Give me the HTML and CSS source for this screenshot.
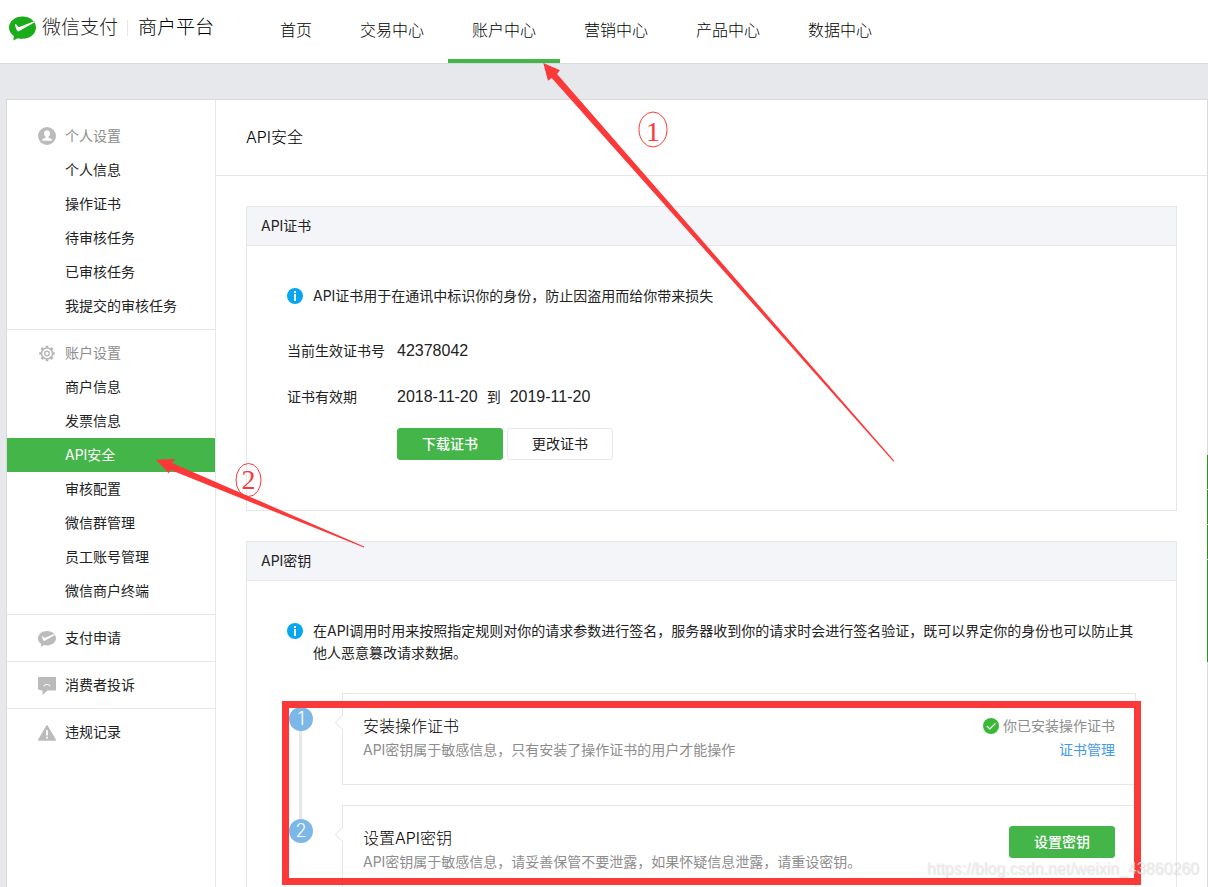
FILE: index.html
```html
<!DOCTYPE html>
<html lang="zh-CN">
<head>
<meta charset="utf-8">
<title>API安全 - 微信支付商户平台</title>
<link rel="stylesheet" href="styles.css">
</head>
<body>
<div class="page">
  <header class="topbar">
    <a class="brand" href="#">
      <svg class="brand-mark" viewBox="0 0 27 25" aria-hidden="true"><path fill="#1aad19" d="M13.500 0.500C6.200 0.500 0 5.300 0 11.500c0 3.600 1.900 6.400 4.900 8.500L4.300 24.600l4.600-2.400c1.500.4 3 .6 4.600.6 7.400 0 13.500-4.800 13.500-11.300C27 5.300 20.900.5 13.500.5z"/><path fill="#fff" d="M6.200 8.200c-.5 1 1.200 5.300 2.100 6.600.5.700 1.200.7 2 .3L25.300 6.600l-.8-1.200-14.200 5.500c-.5.200-.8.100-1.200-.2L6.900 8.100z"/></svg>
      <span>微信支付</span>
      <span class="brand-divider"></span>
      <span class="brand-sub">商户平台</span>
    </a>
    <nav class="topnav">
      <a href="#">首页</a>
      <a href="#">交易中心</a>
      <a class="active" href="#">账户中心</a>
      <a href="#">营销中心</a>
      <a href="#">产品中心</a>
      <a href="#">数据中心</a>
    </nav>
  </header>

  <div class="frame">
    <nav class="sidebar">
      <section class="group">
        <h2 class="row muted">
          <svg class="icon" viewBox="0 0 18 18" aria-hidden="true"><circle cx="9" cy="9" r="9" fill="#bbb"/><path fill="#fff" d="M9 3.200c-1.900 0-3 1.400-3 3.200 0 1.300.6 2.500 1.500 3.200v1.200L4.300 12v1.800h9.400V12l-3.200-1.200V9.600c.9-.7 1.500-1.900 1.500-3.200 0-1.800-1.100-3.200-3-3.200z"/></svg>
          <span>个人设置</span>
        </h2>
        <a class="row item" href="#">个人信息</a>
        <a class="row item" href="#">操作证书</a>
        <a class="row item" href="#">待审核任务</a>
        <a class="row item" href="#">已审核任务</a>
        <a class="row item" href="#">我提交的审核任务</a>
      </section>
      <section class="group">
        <h2 class="row muted">
          <svg class="icon" viewBox="0 0 18 18" aria-hidden="true"><g fill="none" stroke="#b5b5b5"><circle cx="9" cy="9.500" r="5.500" stroke-width="1.500"/><circle cx="9" cy="9.500" r="2.300" stroke-width="1.300"/><path stroke-width="2.600" d="M9 1.700v2M9 15.300v2M1.200 9.500h2M14.800 9.500h2M3.500 4l1.400 1.400M13.100 13.600l1.400 1.400M14.500 4l-1.400 1.400M4.900 13.600l-1.400 1.400"/></g></svg>
          <span>账户设置</span>
        </h2>
        <a class="row item" href="#">商户信息</a>
        <a class="row item" href="#">发票信息</a>
        <a class="row item current" href="#">API安全</a>
        <a class="row item" href="#">审核配置</a>
        <a class="row item" href="#">微信群管理</a>
        <a class="row item" href="#">员工账号管理</a>
        <a class="row item" href="#">微信商户终端</a>
      </section>
      <section class="group">
        <a class="row" href="#">
          <svg class="icon" viewBox="0 0 18 18" aria-hidden="true"><path fill="#bbb" d="M9 2C4 2 0 5.100 0 9.300c0 2.300 1.200 4.200 3.100 5.500l.2 3 3-1.700c.9.200 1.800.3 2.700.3 5 0 9-3 9-7.100S14 2 9 2z"/><path fill="#fff" d="M4.100 7.300c-.3.700.8 3.500 1.400 4.300.3.500.8.500 1.300.2L16.900 6l-.8-1-9.100 3.800c-.4.100-.6.100-.9-.1L4.600 7.200z"/></svg>
          <span>支付申请</span>
        </a>
      </section>
      <section class="group">
        <a class="row" href="#">
          <svg class="icon" viewBox="0 0 18 18" aria-hidden="true"><path fill="#bbb" d="M0 1h18v13.500h-8.500L4.500 19v-4.500L0 13.500z"/><path fill="none" stroke="#fff" stroke-width="1.100" d="M5.800 10.200c1.500-2.200 4.900-2.200 6.400 0"/></svg>
          <span>消费者投诉</span>
        </a>
      </section>
      <section class="group">
        <a class="row" href="#">
          <svg class="icon" viewBox="0 0 18 18" aria-hidden="true"><path fill="#bbb" stroke="#bbb" stroke-width="1.500" stroke-linejoin="round" d="M9 2.800L17.200 17H.8z"/><path fill="#fff" d="M8.100 7h1.800v5.500H8.100zM8.100 13.700h1.800v1.700H8.100z"/></svg>
          <span>违规记录</span>
        </a>
      </section>
    </nav>

    <main class="content">
      <h1 class="title">API安全</h1>
      <div class="panels">
        <section class="panel">
          <h2 class="panel-head">API证书</h2>
          <div class="panel-body">
            <div class="notice">
              <svg class="notice-icon" viewBox="0 0 16 16" aria-hidden="true"><circle cx="8" cy="8" r="8" fill="#06a7ee"/><path fill="#fff" d="M7 3h2v2H7zM7 6h2v7H7z"/></svg>
              <p>API证书用于在通讯中标识你的身份，防止因盗用而给你带来损失</p>
            </div>
            <dl class="facts">
              <dt>当前生效证书号</dt>
              <dd>42378042</dd>
              <dt>证书有效期</dt>
              <dd><span>2018-11-20</span><span class="to">到</span><span>2019-11-20</span></dd>
            </dl>
            <div class="actions">
              <button class="btn primary" type="button">下载证书</button>
              <button class="btn" type="button">更改证书</button>
            </div>
          </div>
        </section>

        <section class="panel">
          <h2 class="panel-head">API密钥</h2>
          <div class="panel-body">
            <div class="notice">
              <svg class="notice-icon" viewBox="0 0 16 16" aria-hidden="true"><circle cx="8" cy="8" r="8" fill="#06a7ee"/><path fill="#fff" d="M7 3h2v2H7zM7 6h2v7H7z"/></svg>
              <p>在API调用时用来按照指定规则对你的请求参数进行签名，服务器收到你的请求时会进行签名验证，既可以界定你的身份也可以防止其他人恶意篡改请求数据。</p>
            </div>
            <ol class="steps">
              <li class="step">
                <span class="num">1</span>
                <div class="card">
                  <div>
                    <h3>安装操作证书</h3>
                    <p class="desc">API密钥属于敏感信息，只有安装了操作证书的用户才能操作</p>
                  </div>
                  <div class="side">
                    <span class="status"><svg class="ok" viewBox="0 0 16 16" aria-hidden="true"><circle cx="8" cy="8" r="8" fill="#3cb838"/><path fill="none" stroke="#fff" stroke-width="1.200" d="M3.800 8l3 3 5.700-5.700"/></svg>你已安装操作证书</span>
                    <a class="link" href="#">证书管理</a>
                  </div>
                </div>
              </li>
              <li class="step">
                <span class="num">2</span>
                <div class="card">
                  <div>
                    <h3>设置API密钥</h3>
                    <p class="desc">API密钥属于敏感信息，请妥善保管不要泄露，如果怀疑信息泄露，请重设密钥。</p>
                  </div>
                  <button class="btn primary" type="button">设置密钥</button>
                </div>
              </li>
            </ol>
          </div>
        </section>
      </div>
    </main>
  </div>

  <div class="edge-tab"><i></i><i></i><i></i><i class="long"></i></div>

  <svg class="marks" width="1208" height="887" viewBox="0 0 1208 887" aria-hidden="true">
    <rect x="285.500" y="704.500" width="852" height="177" fill="none" stroke="#fd3838" stroke-width="7"/>
    <path fill="#fd3838" d="M543.300 63L560 70.300 557 74 894.300 460.700 893.300 461.500 551.700 78 548 80.700z"/>
    <path fill="#fd3838" d="M156 459.700L175 459 172 463 364.200 546.500 363.800 547.500 170.700 470 168.700 473.300z"/>
    <g fill="none" stroke="#fd3838"><ellipse cx="653" cy="129.500" rx="14" ry="17.500"/><ellipse cx="248.500" cy="480" rx="12.500" ry="16.500"/></g>
    <g class="mark-num" fill="#fd3838"><text x="653" y="141">1</text><text x="248.500" y="489">2</text></g>
  </svg>
  <div class="watermark">https://blog.csdn.net/weixin_43860260</div>
</div>
</body>
</html>
```
FILE: styles.css
```css
* { box-sizing: border-box; }

body, h1, h2, h3, p, dl, dd, ol { margin: 0; padding: 0; }

body {
  background: #e7e8eb;
  color: #222;
  font: 14px/22px Inter, "Noto Sans CJK SC", sans-serif;
}

h1, h2, h3 { font-size: 14px; font-weight: inherit; }

a { color: inherit; text-decoration: none; }

.page {
  position: relative;
  display: flex;
  flex-direction: column;
  height: 100vh;
  overflow: hidden;
}

/* Top bar */
.topbar {
  display: flex;
  flex: none;
  background: #fff;
  border-bottom: 1px solid #d9dadc;
}

.brand {
  display: flex;
  align-items: center;
  width: 256px;
  height: 56px;
  padding-left: 9px;
  font-size: 19px;
  font-weight: 300;
  color: #222;
}

.brand-mark { width: 27px; height: 25px; margin-right: 6px; }

.brand-divider {
  width: 1px;
  height: 16px;
  margin: 0 10px 0 9px;
  background: #e7e7e7;
}

.brand-sub { color: #000; }

.topnav {
  display: flex;
  color: #000;
  font-size: 16px;
  font-weight: 300;
}

.topnav a {
  height: 63px;
  padding: 0 24px;
  line-height: 60px;
  border-bottom: 4px solid transparent;
}

.topnav .active { border-color: #44b549; }

/* Main frame */
.frame {
  display: flex;
  flex: none;
  margin: 35px 0 0 6px;
  background: #fff;
  border: 1px solid #d9dadc;
}

.sidebar {
  flex: none;
  width: 209px;
  padding-top: 13px;
  border-right: 1px solid #e7e7eb;
}

.group { padding: 6px 0; }

.group + .group { border-top: 1px solid #e7e7eb; }

.row {
  display: flex;
  align-items: center;
  gap: 9px;
  height: 34px;
  padding-left: 31px;
}

.item { padding-left: 58px; }

.muted { color: #8d8d8d; }

.current { background: #44b549; color: #fff; }

.icon { width: 18px; height: 18px; overflow: visible; }

.content { flex: 1; min-width: 0; }

.title {
  padding: 0 30px;
  border-bottom: 1px solid #e7e7eb;
  color: #000;
  font-size: 16px;
  font-weight: 300;
  line-height: 75px;
}

.panels {
  display: flex;
  flex-direction: column;
  gap: 30px;
  padding: 30px;
}

.panel { border: 1px solid #e7e7eb; }

.panel-head {
  padding: 0 14px;
  background: #f4f5f9;
  border-bottom: 1px solid #e7e7eb;
  line-height: 38px;
}

.panel-body { padding: 39px 40px 50px; }

.notice { display: flex; gap: 10px; }

.notice-icon { flex: none; width: 16px; height: 16px; margin-top: 3px; }

.facts {
  display: grid;
  grid-template-columns: 110px 1fr;
  row-gap: 24px;
  padding: 33px 0 20px;
}

.facts dd {
  display: flex;
  gap: 9px;
  font-family: "Liberation Sans", "Noto Sans CJK SC", sans-serif;
  font-size: 16px;
}

.facts .to { font-size: 14px; }

.actions { display: flex; gap: 4px; padding-left: 110px; }

.btn {
  width: 106px;
  height: 32px;
  padding: 0;
  background: #fff;
  border: 1px solid #e7e7eb;
  border-radius: 3px;
  color: #222;
  font: inherit;
}

.btn.primary {
  background: #44b549;
  border-color: #44b549;
  color: #fff;
  font-weight: 500;
}

/* Steps */
.steps {
  display: flex;
  flex-direction: column;
  gap: 20px;
  padding: 29px 0 0 2px;
  list-style: none;
}

.step {
  position: relative;
  display: grid;
  grid-template-columns: 24px 1fr;
  column-gap: 29px;
}

.step:not(:last-child)::before {
  content: "";
  position: absolute;
  left: 10px;
  top: 26px;
  bottom: -34px;
  width: 3px;
  background: #e7e7eb;
}

.num {
  position: relative;
  height: 24px;
  margin-top: 14px;
  border-radius: 50%;
  background: #7bb8e8;
  color: #fff;
  font-size: 18px;
  font-weight: 300;
  line-height: 24px;
  text-align: center;
}

.card {
  position: relative;
  display: flex;
  justify-content: space-between;
  align-items: flex-start;
  min-height: 92px;
  padding: 20px;
  border: 1px solid #e7e7eb;
}

.card::before {
  content: "";
  position: absolute;
  left: -6px;
  top: 23px;
  width: 10px;
  height: 10px;
  background: #fff;
  border: 1px solid #e7e7eb;
  border-width: 0 0 1px 1px;
  transform: rotate(45deg);
}

.card h3 {
  color: #000;
  font-size: 16px;
  font-weight: 300;
  line-height: 24px;
}

.desc, .side { color: #8d8d8d; line-height: 24px; }

.side { display: flex; flex-direction: column; align-items: flex-end; }

.status { display: flex; align-items: center; gap: 4px; }

.ok { width: 16px; height: 16px; }

.link { color: #459ae9; }

/* Layers over the page */
.edge-tab {
  position: absolute;
  right: 0;
  top: 455px;
  display: grid;
  gap: 1px;
  width: 1px;
}

.edge-tab i { height: 34px; background: #1a9c0c; }

.edge-tab .long { height: 102px; }

.marks { position: absolute; left: 0; top: 0; pointer-events: none; }

.mark-num {
  font: 28px "Liberation Serif", serif;
  text-anchor: middle;
}

.watermark {
  position: absolute;
  right: 9px;
  bottom: 7px;
  color: rgba(235, 235, 235, 0.8);
  font: 16px/22px "Liberation Sans", sans-serif;
  text-shadow: 1px 1px 1px rgba(120, 120, 120, 0.2);
}
```
